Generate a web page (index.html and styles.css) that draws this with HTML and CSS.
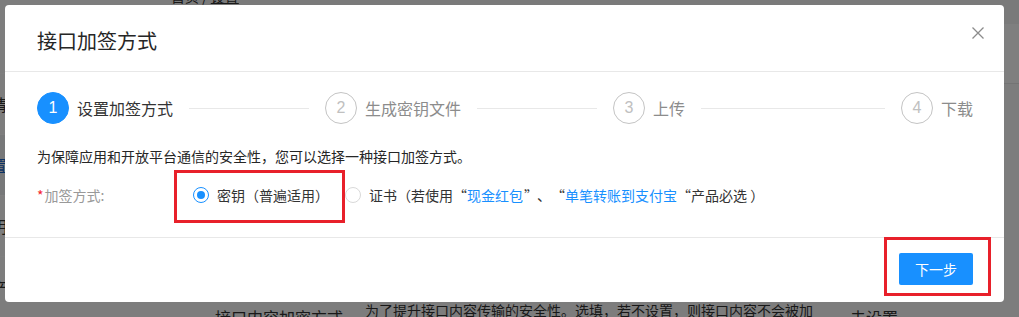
FILE: index.html
```html
<!DOCTYPE html>
<html lang="zh-CN">
<head>
<meta charset="UTF-8">
<title>接口加签方式</title>
<link rel="stylesheet" href="styles.css">
</head>
<body>
<div class="page">
    <div class="side">
        <div class="side-row side-top"><span class="small">6</span><span class="small">*</span></div>
        <div class="side-row">情</div>
        <div class="side-row current">置</div>
        <div class="side-row">明</div>
        <div class="side-row">产</div>
    </div>
    <div class="main">
        <div class="crumbs">首页 / <span class="crumb-link">设置</span></div>
        <div class="panel-head"></div>
        <div class="panel-body"></div>
        <div class="table-row">
            <div class="cell-label">接口内容加密方式</div>
            <div class="cell-desc">为了提升接口内容传输的安全性。选填，若不设置，则接口内容不会被加密。</div>
            <div class="cell-value">未设置</div>
        </div>
    </div>
</div>

<div class="mask"></div>

<div class="modal">
    <div class="modal-header">
        <h2 class="modal-title">接口加签方式</h2>
        <span class="modal-close">
            <svg width="12" height="12" viewBox="0 0 12 12"><path d="M0.5 0.5 L11.5 11.5 M11.5 0.5 L0.5 11.5" stroke="#8c8c8c" stroke-width="1.3" fill="none"/></svg>
        </span>
    </div>

    <div class="modal-body">
        <!-- steps -->
        <div class="steps">
            <div class="step active">
                <span class="step-icon">1</span>
                <span class="step-title">设置加签方式</span>
                <span class="step-tail"></span>
            </div>
            <div class="step">
                <span class="step-icon">2</span>
                <span class="step-title">生成密钥文件</span>
                <span class="step-tail"></span>
            </div>
            <div class="step">
                <span class="step-icon">3</span>
                <span class="step-title">上传</span>
                <span class="step-tail"></span>
            </div>
            <div class="step last">
                <span class="step-icon">4</span>
                <span class="step-title">下载</span>
            </div>
        </div>

        <p class="intro">为保障应用和开放平台通信的安全性，您可以选择一种接口加签方式。</p>

        <div class="form-row">
            <label class="form-label"><span class="req">*</span>加签方式:</label>
            <div class="radio-group">
                <label class="radio checked"><span class="radio-dot"></span><span class="radio-text">密钥（普遍适用）</span></label>
                <label class="radio"><span class="radio-dot"></span><span class="radio-text">证书（若使用<span class="q q-open">“</span><a class="link">现金红包</a><span class="q q-close">”</span>、<span class="q q-open">“</span><a class="link">单笔转账到支付宝</a><span class="q q-open">“</span>产品必选 ）</span></label>
            </div>
        </div>
    </div>

    <div class="modal-footer">
        <button class="btn-primary">下一步</button>
    </div>

    <!-- annotation boxes -->
    <div class="mark mark-radio"></div>
    <div class="mark mark-btn"></div>
</div>
</body>
</html>
```

FILE: styles.css
```css
/* page behind the dialog */
body {
    margin: 0;
    background: #fff;
    font-family: "Noto Sans CJK SC", "Microsoft YaHei", sans-serif;
    color: #333;
    overflow: hidden;
}

.page {
    display: flex;
    width: 1019px;
    height: 317px;
}

.side {
    width: 209px;
    margin-left: -9px;
    flex: none;
}

.side-row {
    height: 60px;
    border-bottom: 1px solid #fff;
    background: #fafafa;
    font-size: 16px;
    line-height: 60px;
    color: #333;
}

.side-top {
    height: 74px;
    display: flex;
    flex-direction: column;
    padding-top: 8px;
    box-sizing: border-box;
    line-height: 20px;
}

.side-top .small {
    font-size: 13px;
    color: #555;
}

.side-row.current {
    background: #eef0f3;
    color: #1865c8;
}

.main {
    flex: 1;
    display: flex;
    flex-direction: column;
}

.main > div {
    flex: none;
}

.crumbs {
    height: 38px;
    margin-top: -14px;
    margin-left: -29px;
    font-size: 14px;
    line-height: 20px;
    background: #f5f5f5;
}

.crumb-link {
    text-decoration: underline;
}

.panel-head {
    height: 59px;
    background: #fff;
    border-bottom: 1px solid #e8e8e8;
}

.panel-body {
    height: 212px;
    background: #fafafa;
}

.table-row {
    display: grid;
    grid-template-columns: 150px 485px 1fr;
    padding-left: 15px;
    background: #fafafa;
}

.cell-label,
.cell-value {
    padding-top: 9px;
    font-size: 16px;
    line-height: 24px;
}

.cell-desc {
    margin-top: 3px;
    padding-right: 35px;
    font-size: 14px;
    line-height: 22px;
}

.mask {
    position: fixed;
    inset: 0;
    background: rgba(0, 0, 0, 0.5);
}

/* dialog */
.modal {
    position: absolute;
    top: 5px;
    left: 5px;
    width: 999px;
    background: #fff;
    border-radius: 4px;
}

.modal-header {
    display: flex;
    justify-content: space-between;
    padding: 22px 20px 16px 32px;
    border-bottom: 1px solid #e8e8e8;
}

.modal-title {
    margin: 0;
    font-size: 20px;
    font-weight: normal;
    line-height: 28px;
    color: #262626;
}

.modal-close {
    display: flex;
    width: 12px;
    height: 12px;
}

.modal-close svg {
    display: block;
}

.modal-body {
    padding: 20px 31px 22px 32px;
}

/* steps */
.steps {
    display: flex;
    height: 32px;
    margin-bottom: 21px;
}

.step {
    flex: 1;
    display: flex;
    align-items: center;
    min-width: 0;
}

.step.last {
    flex: none;
}

.step-icon {
    width: 30px;
    height: 30px;
    border: 1px solid #c4c4c4;
    border-radius: 50%;
    display: flex;
    justify-content: center;
    align-items: center;
    font-family: "Liberation Sans", Arial, sans-serif;
    font-size: 16px;
    color: #c0c0c0;
    flex: none;
}

.step-title {
    margin-left: 8px;
    font-size: 16px;
    line-height: 32px;
    color: #8c8c8c;
    white-space: nowrap;
}

.step-tail {
    flex: 1;
    height: 1px;
    margin: 0 16px;
    background: #e8e8e8;
}

.step.active .step-icon {
    background: #1890ff;
    border-color: #1890ff;
    color: #fff;
}

.step.active .step-title {
    color: #333;
}

.intro {
    margin: 0;
    font-size: 14px;
    line-height: 22px;
    color: #262626;
}

.form-row {
    display: flex;
    align-items: center;
    height: 40px;
    margin-top: 8px;
}

.form-label {
    width: 156px;
    font-size: 14px;
    color: #999;
    flex: none;
}

.req {
    color: #f5222d;
    margin-right: 1px;
}

.radio-group {
    display: flex;
    align-items: center;
}

.radio {
    display: flex;
    align-items: center;
    margin-right: 8px;
    font-size: 14px;
    line-height: 22px;
    color: #333;
    white-space: nowrap;
}

.radio-dot {
    width: 14px;
    height: 14px;
    border: 1px solid #d9d9d9;
    border-radius: 50%;
    position: relative;
    flex: none;
}

.radio.checked .radio-dot {
    border-color: #1890ff;
}

.radio.checked .radio-dot::after {
    content: "";
    position: absolute;
    top: 3px;
    left: 3px;
    width: 8px;
    height: 8px;
    border-radius: 50%;
    background: #1890ff;
}

.radio-text {
    padding: 0 8px;
}

/* full-width quote marks, as in the original font */
.q {
    display: inline-block;
    width: 14px;
    color: #333;
}

.q-open {
    text-align: right;
    padding-right: 1px;
    width: 13px;
}

.q-close {
    text-align: left;
    padding-left: 1px;
    width: 13px;
}

.link {
    color: #1890ff;
    text-decoration: none;
}

.modal-footer {
    display: flex;
    justify-content: flex-end;
    padding: 15px 31px 17px;
    border-top: 1px solid #e8e8e8;
}

.btn-primary {
    width: 74px;
    height: 32px;
    border: none;
    border-radius: 2px;
    background: #1890ff;
    color: #fff;
    font-family: inherit;
    font-size: 14px;
    padding: 0;
}

/* red highlight frames drawn over the dialog */
.mark {
    position: absolute;
    border: 3px solid #e8202a;
    box-sizing: border-box;
}

.mark-radio {
    left: 169px;
    top: 165px;
    width: 171px;
    height: 53px;
}

.mark-btn {
    left: 879px;
    top: 232px;
    width: 107px;
    height: 59px;
}
```
